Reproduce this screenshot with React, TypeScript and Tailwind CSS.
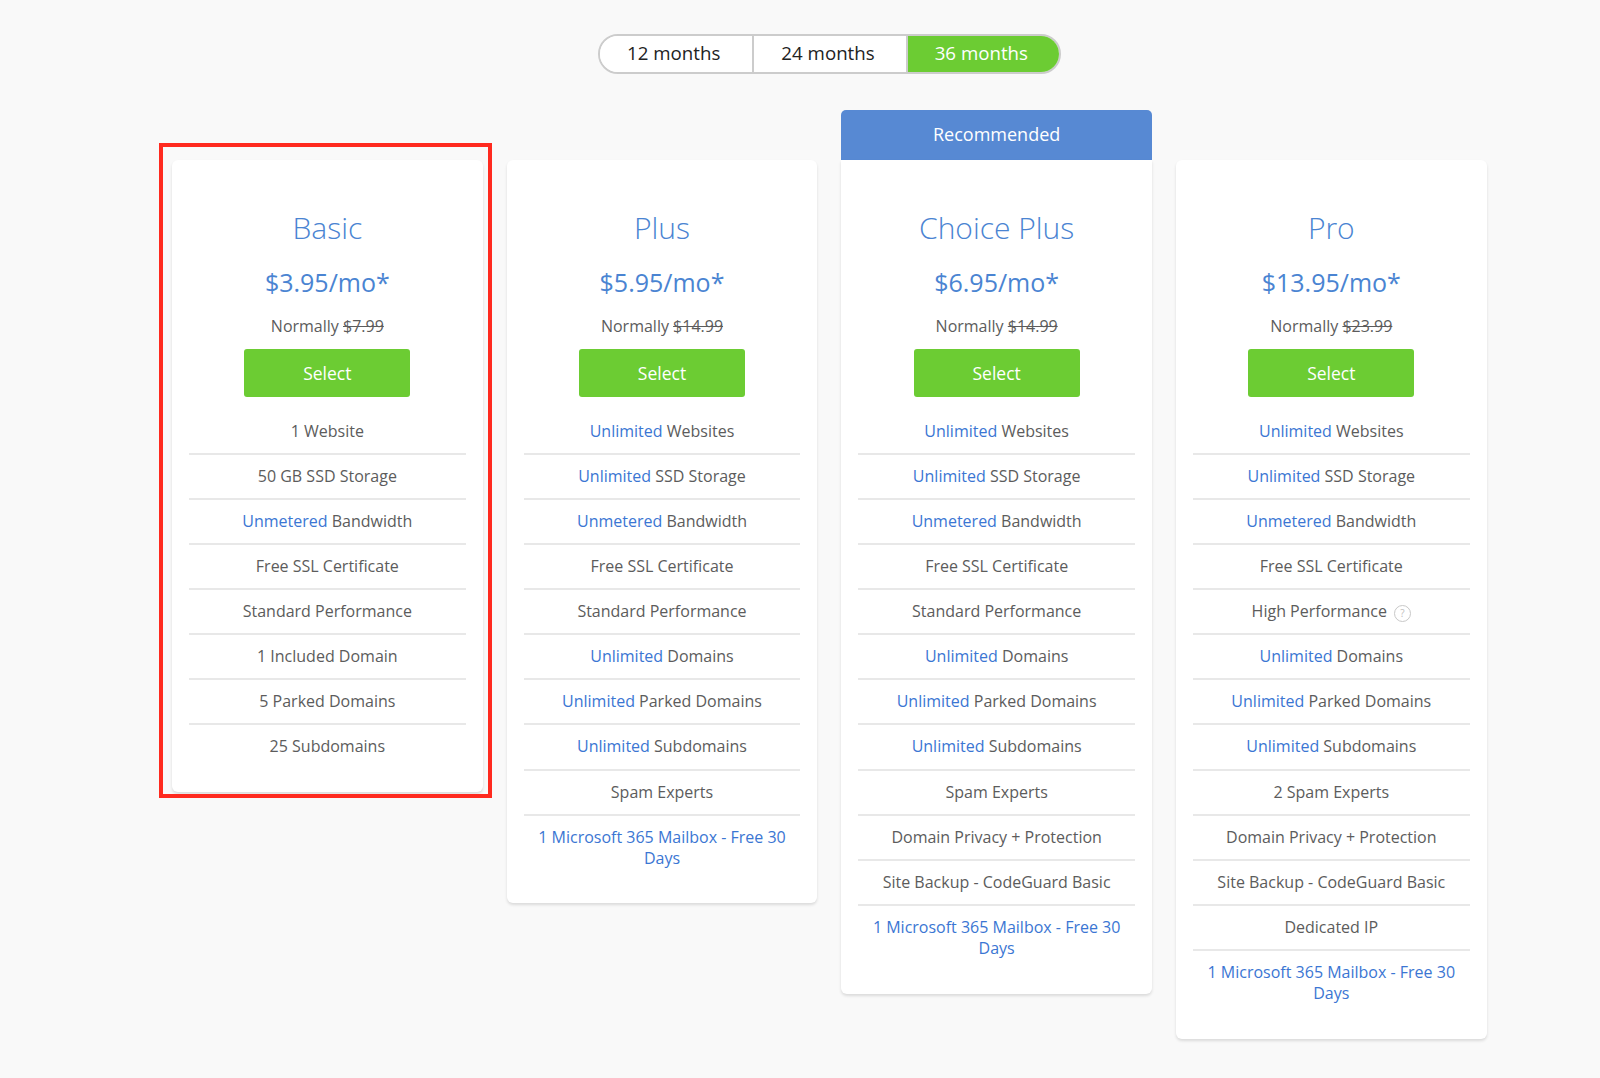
type Part = { text: string; blue?: boolean }
type Plan = {
  name: string
  price: string
  normally: string
  recommended?: boolean
  features: Array<Part[]>
}

const u = (rest: string): Part[] => [{ text: 'Unlimited', blue: true }, { text: ' ' + rest }]
const plain = (text: string): Part[] => [{ text }]
const bandwidth: Part[] = [{ text: 'Unmetered', blue: true }, { text: ' Bandwidth' }]
const mailbox: Part[] = [{ text: '1 Microsoft 365 Mailbox - Free 30 Days', blue: true }]

const plans: Plan[] = [
  {
    name: 'Basic',
    price: '$3.95/mo*',
    normally: '$7.99',
    features: [
      plain('1 Website'),
      plain('50 GB SSD Storage'),
      bandwidth,
      plain('Free SSL Certificate'),
      plain('Standard Performance'),
      plain('1 Included Domain'),
      plain('5 Parked Domains'),
      plain('25 Subdomains'),
    ],
  },
  {
    name: 'Plus',
    price: '$5.95/mo*',
    normally: '$14.99',
    features: [
      u('Websites'),
      u('SSD Storage'),
      bandwidth,
      plain('Free SSL Certificate'),
      plain('Standard Performance'),
      u('Domains'),
      u('Parked Domains'),
      u('Subdomains'),
      plain('Spam Experts'),
      mailbox,
    ],
  },
  {
    name: 'Choice Plus',
    price: '$6.95/mo*',
    normally: '$14.99',
    recommended: true,
    features: [
      u('Websites'),
      u('SSD Storage'),
      bandwidth,
      plain('Free SSL Certificate'),
      plain('Standard Performance'),
      u('Domains'),
      u('Parked Domains'),
      u('Subdomains'),
      plain('Spam Experts'),
      plain('Domain Privacy + Protection'),
      plain('Site Backup - CodeGuard Basic'),
      mailbox,
    ],
  },
  {
    name: 'Pro',
    price: '$13.95/mo*',
    normally: '$23.99',
    features: [
      u('Websites'),
      u('SSD Storage'),
      bandwidth,
      plain('Free SSL Certificate'),
      plain('High Performance'),
      u('Domains'),
      u('Parked Domains'),
      u('Subdomains'),
      plain('2 Spam Experts'),
      plain('Domain Privacy + Protection'),
      plain('Site Backup - CodeGuard Basic'),
      plain('Dedicated IP'),
      mailbox,
    ],
  },
]

function PlanCard({ plan }: { plan: Plan }) {
  return (
    <div className={plan.recommended ? '' : 'mt-[50px]'}>
      {plan.recommended && (
        <div className="h-[50px] rounded-t-[5px] bg-[#5789d3] pb-[2px] text-center text-[18px] leading-[48px] text-white">
          Recommended
        </div>
      )}
      <div
        className={[
          'bg-white px-[17px] pb-[23.5px] pt-[48px] text-center shadow-[0_2px_3px_rgba(0,0,0,0.12)]',
          plan.recommended ? 'rounded-b-[6px]' : 'rounded-[6px]',
        ].join(' ')}
      >
        <h2 className="text-[30px] font-light leading-[40px] text-[#4a84d2]">{plan.name}</h2>
        <div className="mt-[17px] text-[25px] leading-[34px] text-[#4a84d2]">{plan.price}</div>
        <div className="mt-[16px] text-[16px] leading-[22px] text-[#5c5c5c]">
          Normally <span className="line-through">{plan.normally}</span>
        </div>
        <button className="mt-[12px] h-[48px] w-[166px] rounded-[3px] bg-[#6ccc33] text-[17.5px] text-white">
          Select
        </button>
        <ul className="mt-[12.5px]">
          {plan.features.map((parts, i) => (
            <li
              key={i}
              className="border-b-2 border-[#e8e8e8] pb-[11.14px] pt-[11px] text-[16px] leading-[21px] text-[#5c5c5c] last:border-b-0"
            >
              {parts.map((p, j) => (
                <span key={j} className={p.blue ? 'text-[#3b76d3]' : ''}>
                  {p.text}
                </span>
              ))}
              {parts[0].text === 'High Performance' && (
                <span className="ml-[7px] -my-[4px] inline-block h-[17px] w-[17px] rounded-full border-[1.5px] border-[#c8c8c8] text-center align-[0px] text-[10px] leading-[14px] text-[#c0c0c0]">
                  ?
                </span>
              )}
            </li>
          ))}
        </ul>
      </div>
    </div>
  )
}

export default function App() {
  return (
    <div className="min-h-screen bg-[#f9f9f9] font-['Open_Sans',sans-serif]">
      <div className="ml-[172px] flex w-[1315px] flex-col items-center pt-[34px]">
        <div className="flex h-[40px] w-[463px] overflow-hidden rounded-full border-2 border-[#cccccc] text-[18.7px]">
          <div className="flex flex-1 items-center justify-center border-r-2 border-[#cccccc] bg-white pb-[1px] pr-[5px] text-[#222222]">
            12 months
          </div>
          <div className="flex flex-1 items-center justify-center border-r-2 border-[#cccccc] bg-white pb-[1px] pr-[4px] text-[#222222]">
            24 months
          </div>
          <div className="flex flex-1 items-center justify-center bg-[#6ccc33] pb-[1px] pr-[4px] text-white">36 months</div>
        </div>

        <div className="relative mt-[36px] grid w-full grid-cols-[repeat(4,310.67px)] items-start gap-x-[24px]">
          {plans.map((plan) => (
            <PlanCard key={plan.name} plan={plan} />
          ))}
          {/* red highlight drawn over the Basic card */}
          <div className="pointer-events-none absolute left-[-13px] top-[33px] h-[655px] w-[333px] border-4 border-[#ff2a1f]" />
        </div>
      </div>
    </div>
  )
}
